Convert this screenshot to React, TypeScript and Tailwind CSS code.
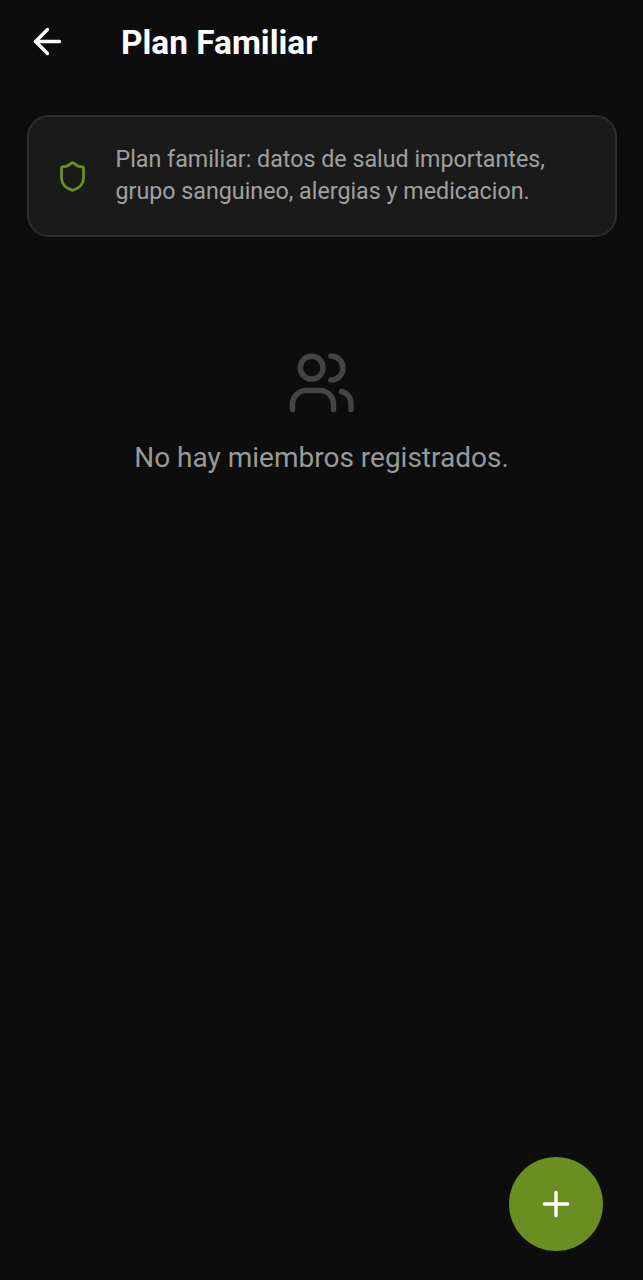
import { ArrowLeft, Plus, Shield } from 'lucide-react';

function App() {
  return (
    <div className="relative h-[1280px] w-full overflow-hidden bg-[#0d0d0d] font-['Roboto',sans-serif]">
      <header className="flex h-[83px] items-center pl-[27px]">
        <ArrowLeft className="h-[41px] w-[41px] text-white" strokeWidth={2} />
        <h1 className="ml-[53px] mt-[3px] text-[33.4px] font-bold text-white">Plan Familiar</h1>
      </header>

      <div className="ml-[27px] mr-[26px] mt-[32px] flex h-[122px] items-center rounded-[22px] border-2 border-[#2e2e2e] bg-[#1a1a1a] pl-[26.5px]">
        <Shield className="h-[33px] w-[33px] shrink-0 text-[#6b8e23]" strokeWidth={2} />
        <p className="mb-[2px] ml-[27px] text-[23.25px] leading-[32px] text-[#a0a0a0]">
          Plan familiar: datos de salud importantes,
          <br />
          grupo sanguineo, alergias y medicacion.
        </p>
      </div>

      <div className="mt-[111px] flex flex-col items-center">
        <svg viewBox="0 0 72 72" fill="none" stroke="#444444" strokeWidth="5.5" strokeLinecap="round" strokeLinejoin="round" className="h-[72px] w-[72px]">
          <circle cx="25.7" cy="19.7" r="11.4" />
          <path d="M45 8A12 12 0 0 1 45 32" />
          <path d="M6.5 61.5V56A13.5 13.5 0 0 1 20 42.5H34A13.5 13.5 0 0 1 47.5 56V61.5" />
          <path d="M55.5 43.5A12 12 0 0 1 65 55.5V61.5" />
        </svg>
        <p className="mt-[20px] text-[28px] leading-[36px] text-[#999999]">No hay miembros registrados.</p>
      </div>

      <button className="absolute left-[509px] top-[1157px] flex h-[94px] w-[94px] items-center justify-center rounded-full bg-[#6b8e23]">
        <Plus className="h-[40px] w-[40px] text-white" strokeWidth={2} />
      </button>
    </div>
  );
}

export default App;
